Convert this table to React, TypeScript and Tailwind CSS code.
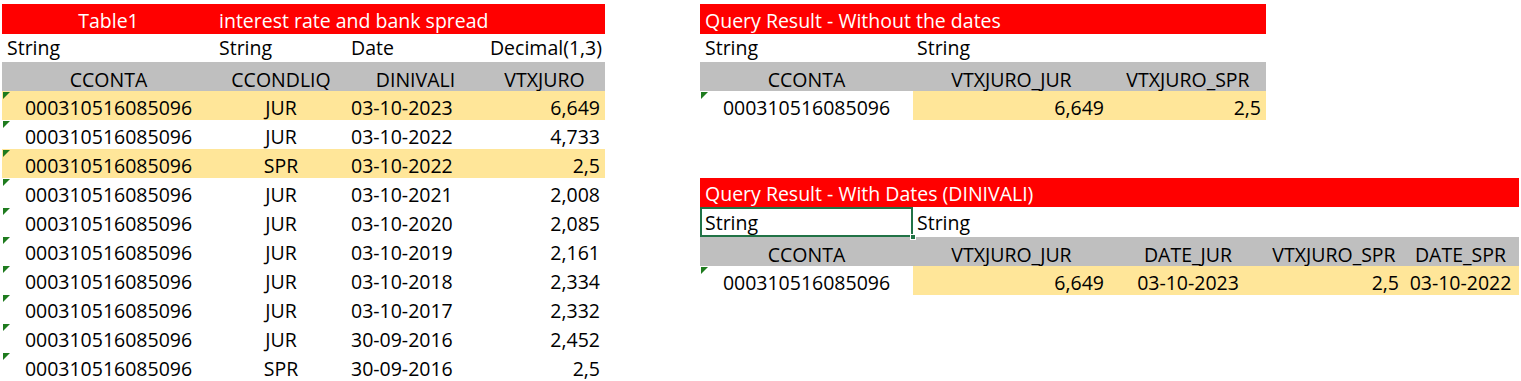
import React from "react";

const Tri = () => (
  <svg className="absolute left-[1px] top-[1px]" width="7" height="7" viewBox="0 0 7 7">
    <polygon points="0,0 7,0 0,7" fill="#1e7b1e" />
  </svg>
);

const leftRows: [string, string, string, boolean][] = [
  ["JUR", "03-10-2023", "6,649", true],
  ["JUR", "03-10-2022", "4,733", false],
  ["SPR", "03-10-2022", "2,5", true],
  ["JUR", "03-10-2021", "2,008", false],
  ["JUR", "03-10-2020", "2,085", false],
  ["JUR", "03-10-2019", "2,161", false],
  ["JUR", "03-10-2018", "2,334", false],
  ["JUR", "03-10-2017", "2,332", false],
  ["JUR", "30-09-2016", "2,452", false],
  ["SPR", "30-09-2016", "2,5", false],
];

const ACC = "000310516085096";

function LeftTable() {
  return (
    <div className="ml-[2px] mt-[4px] w-[603px] grid grid-cols-[213px_132px_137px_121px]">
      {/* red title */}
      <div className="h-[30px] bg-[#ff0000] text-white flex items-end justify-center pb-[4px]">Table1</div>
      <div className="h-[30px] bg-[#ff0000] text-white col-span-3 flex items-end pl-[4px] pb-[4px]">
        interest rate and bank spread
      </div>
      {/* types row */}
      <div className="h-[28px] flex items-end pl-[5px] pb-[5px]">String</div>
      <div className="h-[28px] flex items-end pl-[4px] pb-[5px]">String</div>
      <div className="h-[28px] flex items-end pl-[4px] pb-[5px]">Date</div>
      <div className="h-[28px] flex items-end justify-end pr-[3px] pb-[5px]">Decimal(1,3)</div>
      {/* gray header */}
      <div className="h-[29px] bg-[#bfbfbf] flex items-end justify-center pb-[2px]">CCONTA</div>
      <div className="h-[29px] bg-[#bfbfbf] flex items-end justify-center pb-[2px]">CCONDLIQ</div>
      <div className="h-[29px] bg-[#bfbfbf] flex items-end justify-center pb-[2px]">DINIVALI</div>
      <div className="h-[29px] bg-[#bfbfbf] flex items-end justify-center pb-[2px]">VTXJURO</div>
      {leftRows.map(([c, d, v, y], i) => (
        <React.Fragment key={i}>
          <div className={`relative h-[29px] flex items-end justify-center pb-[3px] ${y ? "bg-[#ffe699]" : ""}`}>
            <Tri />
            {ACC}
          </div>
          <div className={`h-[29px] flex items-end justify-center pb-[3px] ${y ? "bg-[#ffe699]" : ""}`}>{c}</div>
          <div className={`h-[29px] flex items-end pl-[4px] pb-[3px] ${y ? "bg-[#ffe699]" : ""}`}>{d}</div>
          <div className={`h-[29px] flex items-end justify-end pr-[5px] pb-[3px] ${y ? "bg-[#ffe699]" : ""}`}>{v}</div>
        </React.Fragment>
      ))}
    </div>
  );
}

function RightTop() {
  return (
    <div className="mt-[4px] w-[566px] grid grid-cols-[213px_197px_156px]">
      <div className="h-[30px] col-span-3 bg-[#ff0000] text-white flex items-end pl-[5px] pb-[4px]">
        Query Result - Without the dates
      </div>
      <div className="h-[28px] flex items-end pl-[5px] pb-[5px]">String</div>
      <div className="h-[28px] flex items-end pl-[4px] pb-[5px]">String</div>
      <div className="h-[28px]" />
      <div className="h-[29px] bg-[#bfbfbf] flex items-end justify-center pb-[2px]">CCONTA</div>
      <div className="h-[29px] bg-[#bfbfbf] flex items-end justify-center pb-[2px]">VTXJURO_JUR</div>
      <div className="h-[29px] bg-[#bfbfbf] flex items-end justify-center pb-[2px]">VTXJURO_SPR</div>
      <div className="relative h-[29px] flex items-end justify-center pb-[3px]">
        <Tri />
        {ACC}
      </div>
      <div className="h-[29px] bg-[#ffe699] flex items-end justify-end pr-[6px] pb-[3px]">6,649</div>
      <div className="h-[29px] bg-[#ffe699] flex items-end justify-end pr-[5px] pb-[3px]">2,5</div>
    </div>
  );
}

function RightBottom() {
  return (
    <div className="mt-[58px] w-[819px] grid grid-cols-[213px_197px_156px_136px_117px]">
      <div className="h-[29px] col-span-5 bg-[#ff0000] text-white flex items-end pl-[5px] pb-[4px]">
        Query Result - With Dates (DINIVALI)
      </div>
      <div className="relative h-[30px] border-2 border-[#217346] flex items-end pl-[3px] pb-[3px]">
        String
        <div className="absolute right-[-5px] bottom-[-5px] w-[6px] h-[6px] bg-[#217346] border border-white" />
      </div>
      <div className="h-[30px] flex items-end pl-[4px] pb-[5px]">String</div>
      <div className="h-[30px] col-span-3" />
      <div className="h-[29px] bg-[#bfbfbf] flex items-end justify-center pb-[2px]">CCONTA</div>
      <div className="h-[29px] bg-[#bfbfbf] flex items-end justify-center pb-[2px]">VTXJURO_JUR</div>
      <div className="h-[29px] bg-[#bfbfbf] flex items-end justify-center pb-[2px]">DATE_JUR</div>
      <div className="h-[29px] bg-[#bfbfbf] flex items-end justify-center pb-[2px]">VTXJURO_SPR</div>
      <div className="h-[29px] bg-[#bfbfbf] flex items-end justify-center pb-[2px]">DATE_SPR</div>
      <div className="relative h-[29px] flex items-end justify-center pb-[3px]">
        <Tri />
        {ACC}
      </div>
      <div className="h-[29px] bg-[#ffe699] flex items-end justify-end pr-[6px] pb-[3px]">6,649</div>
      <div className="h-[29px] bg-[#ffe699] flex items-end justify-center pb-[3px]">03-10-2023</div>
      <div className="h-[29px] bg-[#ffe699] flex items-end justify-end pr-[3px] pb-[3px]">2,5</div>
      <div className="h-[29px] bg-[#ffe699] flex items-end justify-center pb-[3px]">03-10-2022</div>
    </div>
  );
}

export default function App() {
  return (
    <div className="w-[1521px] h-[381px] overflow-hidden bg-white text-black font-['Open_Sans',sans-serif] text-[19.5px] leading-none flex">
      <LeftTable />
      <div className="ml-[95px] flex flex-col">
        <RightTop />
        <RightBottom />
      </div>
    </div>
  );
}
